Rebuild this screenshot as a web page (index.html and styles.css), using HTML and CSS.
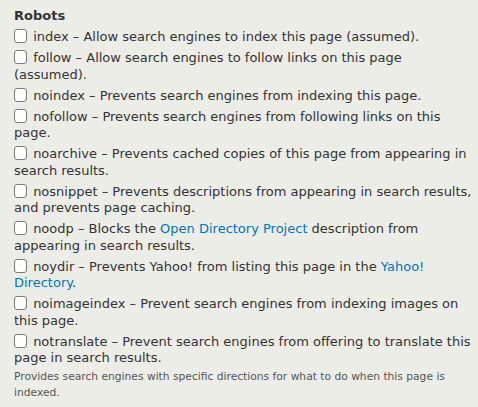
FILE: index.html
```html
<!DOCTYPE html>
<html>
<head>
<meta charset="utf-8">
<link rel="stylesheet" href="styles.css">
</head>
<body>
<div class="field">
  <div class="label">Robots</div>
  <ul class="options">
    <li><label><input type="checkbox"> index – Allow search engines to index this page (assumed).</label></li>
    <li><label><input type="checkbox"> follow – Allow search engines to follow links on this page (assumed).</label></li>
    <li><label><input type="checkbox"> noindex – Prevents search engines from indexing this page.</label></li>
    <li><label><input type="checkbox"> nofollow – Prevents search engines from following links on this page.</label></li>
    <li><label><input type="checkbox"> noarchive – Prevents cached copies of this page from appearing in search results.</label></li>
    <li><label><input type="checkbox"> nosnippet – Prevents descriptions from appearing in search results, and prevents page caching.</label></li>
    <li><label><input type="checkbox"> noodp – Blocks the <a href="#">Open Directory Project</a> description from appearing in search results.</label></li>
    <li><label><input type="checkbox"> noydir – Prevents Yahoo! from listing this page in the <a href="#">Yahoo! Directory</a>.</label></li>
    <li><label><input type="checkbox"> noimageindex – Prevent search engines from indexing images on this page.</label></li>
    <li><label><input type="checkbox"> notranslate – Prevent search engines from offering to translate this page in search results.</label></li>
  </ul>
  <div class="description">Provides search engines with specific directions for what to do when this page is indexed.</div>
</div>
</body>
</html>
```
FILE: styles.css
```css
html, body {
  margin: 0;
  padding: 0;
  background: #edede8;
}
body {
  font-family: "DejaVu Sans", Verdana, sans-serif;
  font-size: 13px;
  color: #333;
}
.field {
  width: 458px;
  padding: 8px 0 0 14px;
}
.label {
  font-weight: bold;
  font-size: 13px;
  line-height: 16px;
  margin-bottom: 5px;
}
.options {
  list-style: none;
  margin: 0;
  padding: 0;
}
.options li {
  line-height: 16.5px;
  margin-bottom: 4.5px;
}
.options li:last-child {
  margin-bottom: 2px;
}
.options input {
  -webkit-appearance: none;
  appearance: none;
  box-sizing: border-box;
  margin: 0 2px 0 0;
  width: 13px;
  height: 14px;
  border: 1px solid #7a7a7a;
  border-radius: 3px;
  background: #fff;
  vertical-align: -2px;
}
.options a {
  color: #0074bd;
  text-decoration: none;
}
.description {
  font-size: 10.7px;
  line-height: 16px;
  color: #555;
  width: 440px;
}
```
